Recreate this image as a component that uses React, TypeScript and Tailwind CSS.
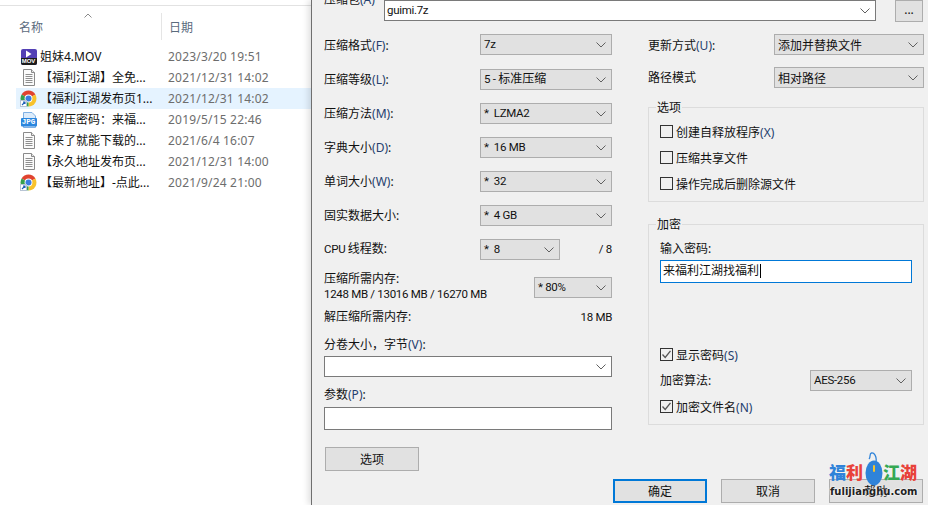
import React from "react";

const FONT = { fontFamily: '"Noto Sans", "Noto Sans CJK SC", sans-serif' };
const NARROW = { fontFamily: '"Roboto", sans-serif' };

function L({ children }: { children: React.ReactNode }) {
  return (
    <span className="whitespace-pre text-[11.5px] tracking-[-0.3px]" style={NARROW}>
      {children}
    </span>
  );
}

function Chevron({ className = "" }: { className?: string }) {
  return (
    <svg width="10" height="6" viewBox="0 0 10 6" className={className}>
      <path d="M0.5 0.5 L5 5 L9.5 0.5" fill="none" stroke="#606060" strokeWidth="1" />
    </svg>
  );
}

function Accel({ children }: { children: React.ReactNode }) {
  return <span className="text-[#24406e]">{children}</span>;
}

function Select({ value, className = "", valueClass = "" }: { value: React.ReactNode; className?: string; valueClass?: string }) {
  return (
    <div className={`flex h-[21px] items-center justify-between border border-[#adadad] bg-[#e1e1e1] pl-[3px] pr-[5px] text-[12px] leading-none text-[#111] ${className}`}>
      <span className={`whitespace-pre ${valueClass}`}>{value}</span>
      <Chevron />
    </div>
  );
}

function Combo({ value, className = "" }: { value?: React.ReactNode; className?: string }) {
  return (
    <div className={`flex h-[21px] items-center justify-between border border-[#7a7a7a] bg-white pl-[2px] pr-[5px] text-[12px] leading-none text-[#111] ${className}`}>
      <span>{value}</span>
      <Chevron />
    </div>
  );
}

function Row({ label, accel, value, className = "", labelClass = "" }: { label: string; accel?: string; value: React.ReactNode; className?: string; labelClass?: string }) {
  return (
    <div className={`flex h-[21px] items-center justify-between text-[12px] ${className}`}>
      <span className={labelClass}>
        {label}
        {accel && <Accel>({accel})</Accel>}:
      </span>
      <Select value={value} className="w-[132px]" />
    </div>
  );
}

function Check({ checked, label, accel, className = "" }: { checked?: boolean; label: string; accel?: string; className?: string }) {
  return (
    <div className={`flex h-[13px] items-center gap-[3px] text-[12px] leading-none ${className}`}>
      <span className="flex h-[13px] w-[13px] shrink-0 items-center justify-center border border-[#333] bg-[#f0f0f0]">
        {checked && (
          <svg width="11" height="11" viewBox="0 0 11 11">
            <path d="M1.5 5.5 L4.2 8.5 L9.5 1.8" fill="none" stroke="#555" strokeWidth="1.3" />
          </svg>
        )}
      </span>
      <span className="translate-y-[1px]">
        {label}
        {accel && <Accel>({accel})</Accel>}
      </span>
    </div>
  );
}

function Group({ title, className = "", children }: { title: string; className?: string; children: React.ReactNode }) {
  return (
    <div className={`relative border border-[#dcdcdc] pl-[11px] pr-[11px] ${className}`}>
      <span className="absolute left-[7px] top-[-7px] bg-[#f0f0f0] px-[1px] text-[12px] leading-[14px]">{title}</span>
      {children}
    </div>
  );
}

function Button({ label, primary, className = "" }: { label: string; primary?: boolean; className?: string }) {
  return (
    <div className={`flex h-[24px] w-[94px] items-center justify-center bg-[#e1e1e1] pt-[1px] text-[12px] leading-none text-[#111] ${primary ? "border-2 border-[#0078d7]" : "border border-[#adadad]"} ${className}`}>
      {label}
    </div>
  );
}

function DocIcon() {
  return (
    <svg width="16" height="18" viewBox="0 0 16 18">
      <path d="M2.5 0.5 H10.5 L13.5 3.5 V16.5 H2.5 Z" fill="#fbfbfb" stroke="#8a8a8a" />
      <path d="M10.5 .5 V3.5 H13.5" fill="#e8e8e8" stroke="#8a8a8a" />
      <path d="M4.5 5.5 H11.5 M4.5 7.5 H11.5 M4.5 9.5 H11.5 M4.5 11.5 H11.5 M4.5 13.5 H11.5" stroke="#8f8f8f" />
    </svg>
  );
}

function ChromeIcon() {
  return (
    <svg width="17" height="17" viewBox="0 0 17 17">
      <path d="M8.5 8.5 L1.6 4.5 A8 8 0 0 1 15.4 4.5 Z" fill="#e0432f" />
      <path d="M8.5 8.5 L15.4 4.5 A8 8 0 0 1 8.5 16.5 Z" fill="#f8c22c" />
      <path d="M8.5 8.5 L8.5 16.5 A8 8 0 0 1 1.6 4.5 Z" fill="#35a04c" />
      <circle cx="8.5" cy="8.5" r="3.9" fill="#fff" />
      <circle cx="8.5" cy="8.5" r="3" fill="#3b7de0" />
      <rect x="0.5" y="10.5" width="6" height="6" fill="#fff" stroke="#b8c4d4" />
      <path d="M2 15 L5 12 M3 12 H5 V14" fill="none" stroke="#1f5fb8" strokeWidth="1.1" />
    </svg>
  );
}

function JpgIcon() {
  return (
    <div className="relative h-[16px] w-[16px]">
      <svg width="16" height="16" viewBox="0 0 16 16" className="absolute left-0 top-0">
        <path d="M2.5 0.5 H11 L14.5 4 V15.5 H2.5 Z" fill="#dcebfa" stroke="#7fb0e4" />
        <rect x="0" y="6" width="16" height="8.5" rx="1" fill="#2a86de" />
      </svg>
      <span className="absolute left-0 top-[6px] w-[16px] text-center text-[7.5px] font-bold leading-[9px] text-white" style={{ fontFamily: '"Liberation Mono", monospace' }}>
        JPG
      </span>
    </div>
  );
}

function MovIcon() {
  return (
    <div className="flex h-[16px] w-[16px] flex-col items-center overflow-hidden rounded-[2px] bg-[#5340b5]">
      <svg width="7" height="8" viewBox="0 0 7 8" className="mt-[1px]">
        <path d="M1 0.5 L6.5 4 L1 7.5 Z" fill="#fff" />
      </svg>
      <span className="flex h-[7px] w-full items-center justify-center bg-[#1c1c1c] text-[6px] font-bold leading-none text-white" style={{ fontFamily: '"Liberation Sans", sans-serif' }}>
        MOV
      </span>
    </div>
  );
}

const files: { icon: React.ReactNode; name: string; date: string; selected?: boolean }[] = [
  { icon: <MovIcon />, name: "姐妹4.MOV", date: "2023/3/20 19:51" },
  { icon: <DocIcon />, name: "【福利江湖】全免...", date: "2021/12/31 14:02" },
  { icon: <ChromeIcon />, name: "【福利江湖发布页1...", date: "2021/12/31 14:02", selected: true },
  { icon: <JpgIcon />, name: "【解压密码：来福...", date: "2019/5/15 22:46" },
  { icon: <DocIcon />, name: "【来了就能下载的...", date: "2021/6/4 16:07" },
  { icon: <DocIcon />, name: "【永久地址发布页...", date: "2021/12/31 14:00" },
  { icon: <ChromeIcon />, name: "【最新地址】-点此...", date: "2021/9/24 21:00" },
];

function Explorer() {
  return (
    <aside className="w-[311px] shrink-0 bg-white text-[12px]">
      <div className="h-[6px] border-b border-[#e2e2e2]" />
      <div className="relative flex h-[34px] items-stretch pt-[7px] text-[#5b6b7d]">
        <div className="flex w-[162px] items-center border-r border-[#e5e5e5] pl-[19px] pt-[2px] text-[12px]">名称</div>
        <div className="flex items-center pl-[7px] pt-[2px]">日期</div>
        <svg width="8" height="5" viewBox="0 0 8 5" className="absolute left-[84px] top-[7px]">
          <path d="M0.5 4.5 L4 1 L7.5 4.5" fill="none" stroke="#8a8a8a" />
        </svg>
      </div>
      <div className="pl-[16px] pt-[6px]">
        {files.map((f, i) => (
          <div key={i} className={`flex h-[21px] items-center ${f.selected ? "bg-[#e5f3ff]" : ""}`}>
            <div className="flex w-[24px] shrink-0 items-center justify-center pl-[1px]">{f.icon}</div>
            <div className="w-[128px] shrink-0 whitespace-nowrap text-[#111]">{f.name}</div>
            <div className="whitespace-nowrap tracking-[0.2px] text-[#6d6d6d]">{f.date}</div>
          </div>
        ))}
      </div>
    </aside>
  );
}

function Watermark() {
  return (
    <div className="pointer-events-none absolute left-[829px] top-[452px] h-[46px] w-[92px]">
      <div className="absolute left-0 top-[10px] flex text-[17px] font-black leading-[19px]" style={{ fontFamily: '"Noto Sans CJK SC", sans-serif' }}>
        <span className="text-[#2f83d9]">福</span>
        <span className="text-[#e8423a]">利</span>
        <span className="ml-[20px] text-[#35a853]">江</span>
        <span className="text-[#e8423a]">湖</span>
      </div>
      <svg width="22" height="34" viewBox="0 0 22 34" className="absolute left-[34px] top-0">
        <path d="M13 10 C14 4 11 0.5 8.5 1 C6 1.5 8 5 6 7" fill="none" stroke="#2f83d9" strokeWidth="1.3" />
        <ellipse cx="11" cy="21" rx="8.5" ry="12.5" fill="#2f83d9" />
        <rect x="10" y="13" width="2" height="7" rx="1" fill="#f6c52c" />
      </svg>
      <div className="absolute left-[1px] top-[34px] whitespace-nowrap text-[10px] font-bold leading-[12px] text-[#222]" style={{ fontFamily: '"DejaVu Sans", sans-serif', textShadow: "0 0 2px #fff, 0 0 2px #fff" }}>
        fulijianghu.com
      </div>
    </div>
  );
}

export default function App() {
  return (
    <div className="relative flex h-[505px] w-[928px] overflow-hidden bg-white text-[#111]" style={FONT}>
      <Explorer />
      <main className="relative flex h-[505px] w-[617px] shrink-0 flex-col border-l border-[#6f6f6f] bg-[#f0f0f0] pl-[12px] shadow-[-3px_0_6px_rgba(0,0,0,0.12)]">
        <div className="flex h-[22px] items-start text-[12px]">
          <span className="-mt-[8px] w-[60px] leading-[16px]">压缩包<Accel>(A)</Accel></span>
          <Combo value={<L>guimi.7z</L>} className="w-[492px]" />
          <div className="ml-[19px] flex h-[22px] w-[28px] items-center justify-center border border-[#adadad] bg-[#e1e1e1] pb-[2px] leading-none">...</div>
        </div>

        <div className="mt-[12px] flex">
          <section className="w-[288px]">
            <Row label="压缩格式" accel="F" value={<L>7z</L>} labelClass="translate-y-[1px]" />
            <Row label="压缩等级" accel="L" value={<><L>5 - </L>标准压缩</>} className="mt-[14px]" />
            <Row label="压缩方法" accel="M" value={<L>*  LZMA2</L>} className="mt-[13px]" />
            <Row label="字典大小" accel="D" value={<L>*  16 MB</L>} className="mt-[13px]" />
            <Row label="单词大小" accel="W" value={<L>*  32</L>} className="mt-[13px]" />
            <Row label="固实数据大小" value={<L>*  4 GB</L>} className="mt-[13px]" />
            <div className="mt-[13px] flex h-[21px] items-center text-[12px]">
              <span className="w-[156px]"><L>CPU </L>线程数:</span>
              <Select value={<L>*  8</L>} className="w-[80px]" />
              <span className="ml-auto"><L>/ 8</L></span>
            </div>
            <div className="mt-[17px] flex h-[21px] items-start justify-between text-[12px]">
              <div className="leading-[15px]">
                <div className="-mt-[6px]">压缩所需内存:</div>
                <div><L>1248 MB / 13016 MB / 16270 MB</L></div>
              </div>
              <Select value={<L>* 80%</L>} className="w-[78px]" />
            </div>
            <div className="mt-[11px] flex h-[16px] items-center justify-between text-[12px]">
              <span>解压缩所需内存:</span>
              <span><L>18 MB</L></span>
            </div>
            <div className="mt-[12px] h-[16px] text-[12px] leading-[16px]">分卷大小，字节<Accel>(V)</Accel>:</div>
            <Combo className="mt-[3px]" />
            <div className="mt-[10px] h-[16px] text-[12px] leading-[16px]">参数<Accel>(P)</Accel>:</div>
            <div className="mt-[4px] h-[23px] border border-[#7a7a7a] bg-white" />
            <Button label="选项" className="ml-[1px] mt-[17px]" />
          </section>

          <section className="ml-[36px] w-[276px]">
            <div className="flex h-[21px] items-center text-[12px]">
              <span className="w-[126px] translate-y-[1px]">更新方式<Accel>(U)</Accel>:</span>
              <Select value="添加并替换文件" valueClass="translate-y-[1px]" className="w-[150px]" />
            </div>
            <div className="mt-[12px] flex h-[21px] items-center text-[12px]">
              <span className="w-[126px]">路径模式</span>
              <Select value="相对路径" valueClass="translate-y-[1px]" className="w-[150px]" />
            </div>
            <Group title="选项" className="mt-[19px] h-[95px] pt-[17px]">
              <Check label="创建自释放程序" accel="X" />
              <Check label="压缩共享文件" className="mt-[13px]" />
              <Check label="操作完成后删除源文件" className="mt-[13px]" />
            </Group>
            <Group title="加密" className="mt-[22px] h-[201px]">
              <div className="mt-[16px] h-[16px] text-[12px] leading-[16px]">输入密码:</div>
              <div className="mt-[3px] flex h-[23px] items-center border border-[#0078d7] bg-white pb-[1px] pl-[2px] text-[12px] leading-none">
                <span>来福利江湖找福利</span>
                <span className="ml-[1px] h-[14px] w-px bg-black" />
              </div>
              <Check checked label="显示密码" accel="S" className="mt-[65px]" />
              <div className="mt-[9px] flex h-[21px] items-center justify-between text-[12px]">
                <span>加密算法:</span>
                <Select value={<L>AES-256</L>} className="w-[102px]" />
              </div>
              <Check checked label="加密文件名" accel="N" className="mt-[9px]" />
            </Group>
          </section>
        </div>

        <div className="mt-[8px] flex w-[599px] justify-end gap-[14px]">
          <Button label="确定" primary />
          <Button label="取消" />
          <Button label="帮助" />
        </div>
      </main>
      <Watermark />
    </div>
  );
}
